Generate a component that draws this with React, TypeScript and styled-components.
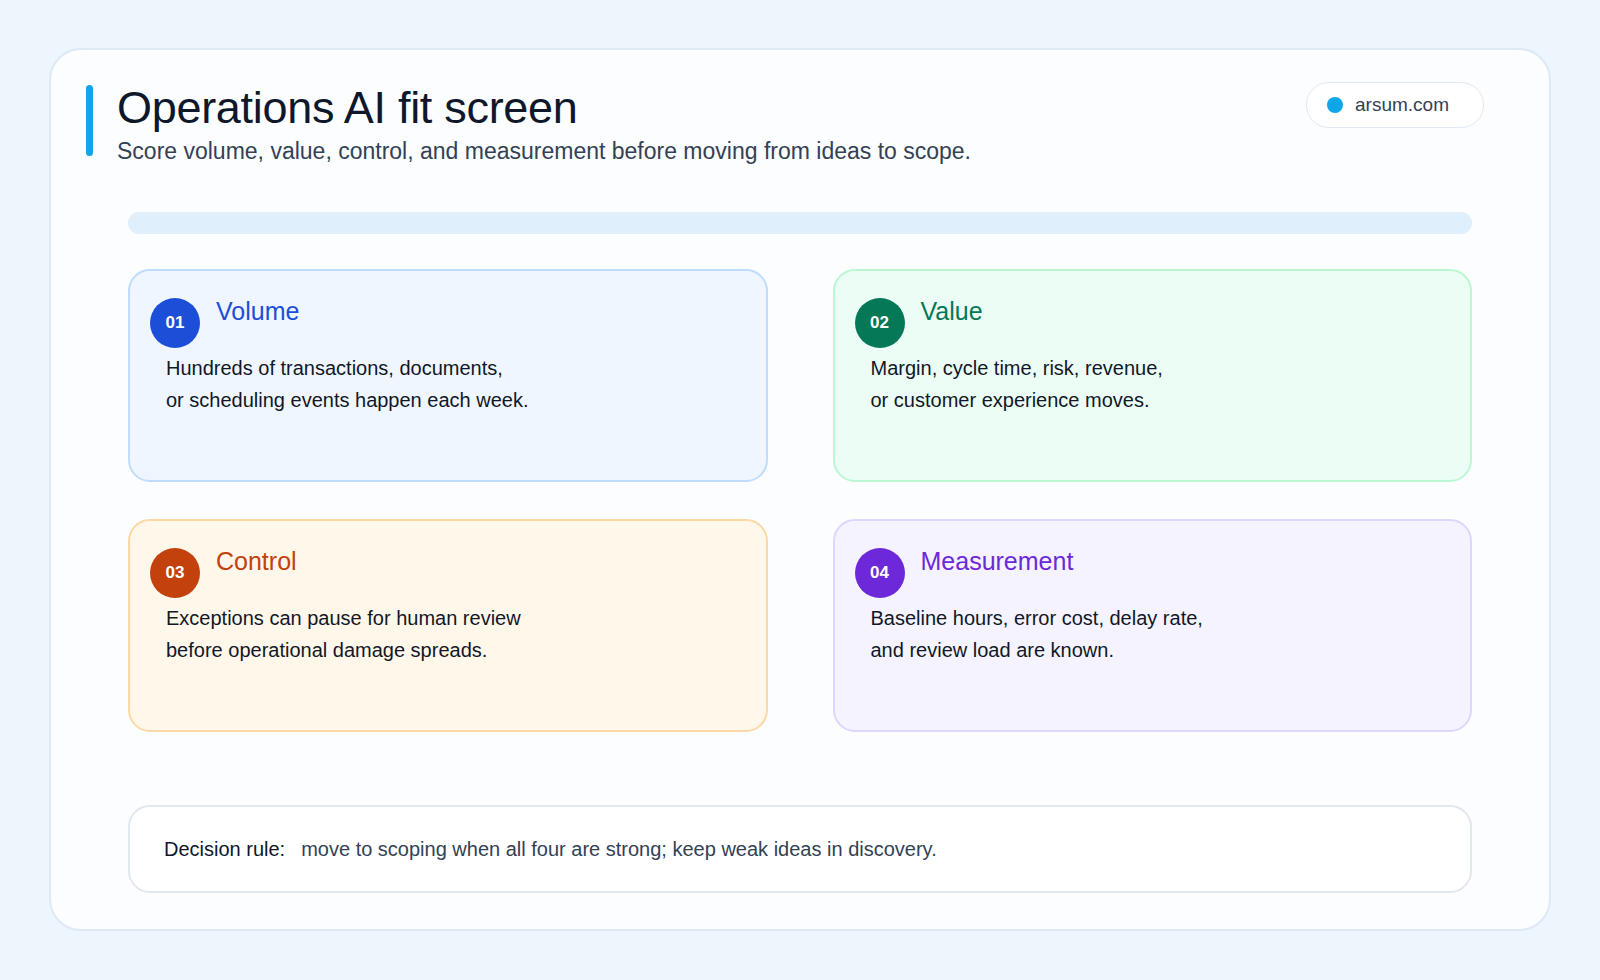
import React from "react";
import styled, { createGlobalStyle } from "styled-components";

const Global = createGlobalStyle`
  html, body { margin: 0; background: #eef6fd; }
  body { font-family: "Liberation Sans", Arial, sans-serif; }
`;

const Page = styled.div`
  padding: 48px 49px 49px 49px;
  box-sizing: border-box;
  height: 980px;
`;

const Card = styled.div`
  box-sizing: border-box;
  height: 883px;
  background: #fbfdff;
  border: 2px solid #dde9f6;
  border-radius: 32px;
  padding: 32px 77px 0 35px;
  display: flex;
  flex-direction: column;
`;

const Header = styled.div`
  display: flex;
  align-items: flex-start;
  justify-content: space-between;
  margin-right: -12px;
`;

const TitleBlock = styled.div`
  display: flex;
  gap: 24px;
`;

const Accent = styled.div`
  width: 7px;
  height: 71px;
  margin-top: 3px;
  border-radius: 4px;
  background: #0ea5e9;
`;

const Title = styled.h1`
  margin: 0;
  font-size: 45px;
  font-weight: 400;
  color: #0f172a;
  line-height: 52px;
  letter-spacing: -0.3px;
`;

const Subtitle = styled.p`
  margin: 2px 0 0;
  font-size: 23px;
  color: #334155;
  line-height: 30px;
`;

const Pill = styled.div`
  margin-top: 0;
  height: 46px;
  width: 178px;
  box-sizing: border-box;
  border: 1px solid #e2e8f0;
  border-radius: 23px;
  background: #fff;
  display: flex;
  align-items: center;
  padding-left: 20px;
  gap: 12px;
  font-size: 19px;
  color: #334155;
`;

const Dot = styled.span`
  width: 16px;
  height: 16px;
  border-radius: 50%;
  background: #0ea5e9;
`;

const Body = styled.div`
  padding-left: 42px;
  display: flex;
  flex-direction: column;
`;

const Progress = styled.div`
  margin-top: 46px;
  height: 22px;
  border-radius: 11px;
  background: #dfeffc;
`;

const Grid = styled.div`
  margin-top: 35px;
  display: grid;
  grid-template-columns: 1fr 1fr;
  column-gap: 65px;
  row-gap: 37px;
`;

const Tile = styled.div<{ $bg: string; $border: string }>`
  height: 213px;
  box-sizing: border-box;
  border: 2px solid ${(p) => p.$border};
  background: ${(p) => p.$bg};
  border-radius: 22px;
  padding: 25px 20px 0 20px;
  display: flex;
  flex-direction: column;
`;

const TileHead = styled.div`
  display: flex;
  gap: 16px;
`;

const Badge = styled.div<{ $c: string }>`
  width: 50px;
  height: 50px;
  margin-top: 2px;
  border-radius: 50%;
  background: ${(p) => p.$c};
  color: #fff;
  font-size: 17px;
  font-weight: 700;
  display: flex;
  align-items: center;
  justify-content: center;
`;

const TileTitle = styled.div<{ $c: string }>`
  font-size: 25px;
  color: ${(p) => p.$c};
  line-height: 30px;
`;

const TileText = styled.p`
  margin: 4px 0 0 16px;
  font-size: 20px;
  line-height: 32px;
  color: #111827;
`;

const Rule = styled.div`
  margin-top: 73px;
  height: 88px;
  box-sizing: border-box;
  border: 2px solid #e2e8f0;
  border-radius: 22px;
  background: #fff;
  display: flex;
  align-items: center;
  padding-left: 34px;
  font-size: 20px;
  gap: 16px;
`;

const RuleLabel = styled.span`
  color: #0f172a;
`;

const RuleText = styled.span`
  color: #334155;
`;

const items = [
  { n: "01", t: "Volume", c: "#1d4ed8", tc: "#1d4ed8", bg: "#eff6ff", b: "#bfdbfe", l: ["Hundreds of transactions, documents,", "or scheduling events happen each week."] },
  { n: "02", t: "Value", c: "#047857", tc: "#047857", bg: "#ecfdf5", b: "#bbf7d0", l: ["Margin, cycle time, risk, revenue,", "or customer experience moves."] },
  { n: "03", t: "Control", c: "#c2410c", tc: "#c2410c", bg: "#fff7ea", b: "#fcd9a4", l: ["Exceptions can pause for human review", "before operational damage spreads."] },
  { n: "04", t: "Measurement", c: "#6d28d9", tc: "#6d28d9", bg: "#f5f3ff", b: "#ddd6fe", l: ["Baseline hours, error cost, delay rate,", "and review load are known."] },
];

export default function App() {
  return (
    <Page>
      <Global />
      <Card>
        <Header>
          <TitleBlock>
            <Accent />
            <div>
              <Title>Operations AI fit screen</Title>
              <Subtitle>Score volume, value, control, and measurement before moving from ideas to scope.</Subtitle>
            </div>
          </TitleBlock>
          <Pill>
            <Dot />
            arsum.com
          </Pill>
        </Header>
        <Body>
          <Progress />
          <Grid>
            {items.map((it) => (
              <Tile key={it.n} $bg={it.bg} $border={it.b}>
                <TileHead>
                  <Badge $c={it.c}>{it.n}</Badge>
                  <TileTitle $c={it.tc}>{it.t}</TileTitle>
                </TileHead>
                <TileText>
                  {it.l[0]}
                  <br />
                  {it.l[1]}
                </TileText>
              </Tile>
            ))}
          </Grid>
          <Rule>
            <RuleLabel>Decision rule:</RuleLabel>
            <RuleText>move to scoping when all four are strong; keep weak ideas in discovery.</RuleText>
          </Rule>
        </Body>
      </Card>
    </Page>
  );
}
